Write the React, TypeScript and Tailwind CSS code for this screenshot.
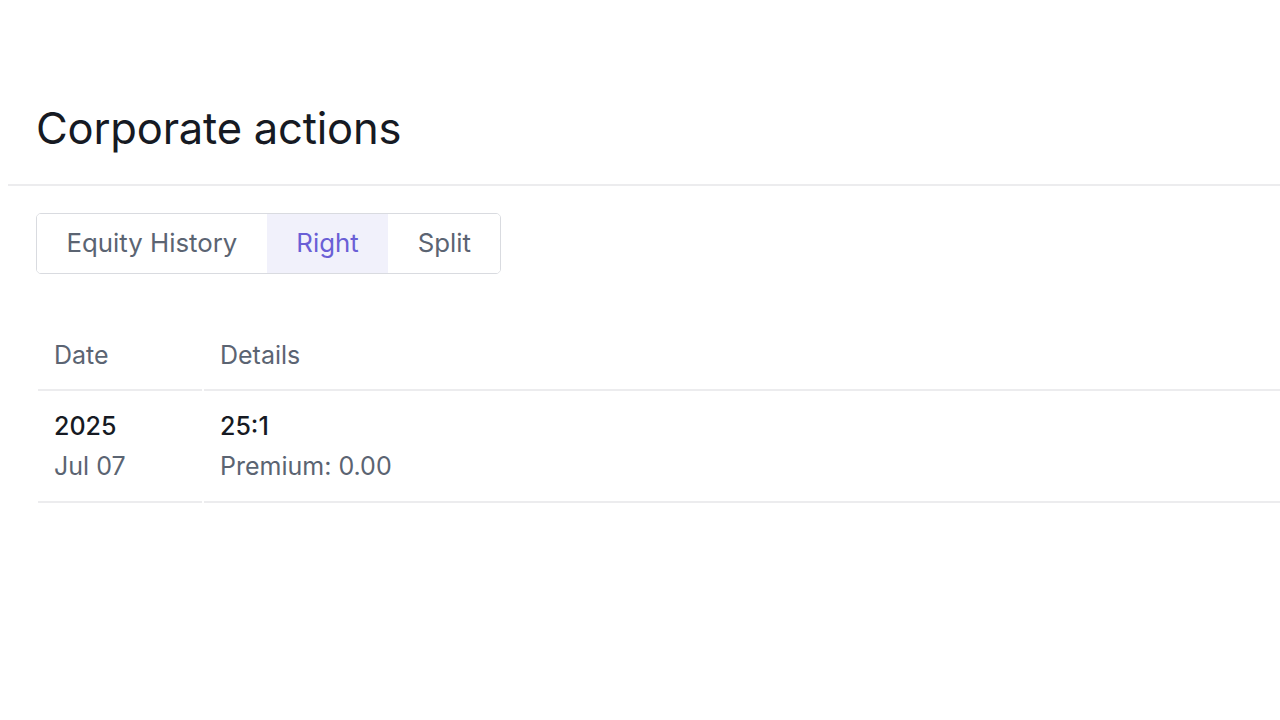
import { useState } from 'react';

const TABS = ['Equity History', 'Right', 'Split'];

const ROWS = [{ year: '2025', date: 'Jul 07', ratio: '25:1', premium: 'Premium: 0.00' }];

export default function App() {
  const [tab, setTab] = useState('Right');

  return (
    <div className="min-h-[720px] bg-white font-['Inter',sans-serif] pl-2">
      <div className="pt-[100px] pb-[28px] pl-7">
        <h1 className="text-[43.5px] leading-[56px] text-[#161a23] tracking-[-0.2px]">Corporate actions</h1>
      </div>
      <div className="border-t-2 border-[#ececee]" />

      <div className="pl-7 pt-[27px]">
        <div className="inline-flex border border-[#d9dbe0] rounded-[5px] overflow-hidden h-[61px]">
          {TABS.map((t) => (
            <button
              key={t}
              type="button"
              onClick={() => setTab(t)}
              className={`px-[29.5px] text-[25.8px] ${tab === t ? 'bg-[#f1f1fb] text-[#6a5fd6]' : 'bg-white text-[#5b6472]'}`}
            >
              {t}
            </button>
          ))}
        </div>
      </div>

      <table className="ml-[28px] mt-[49px] w-[calc(100%-26px)] border-separate border-spacing-x-[2px] border-spacing-y-0 text-[25px]">
        <thead>
          <tr>
            <th className="w-[164px] text-left font-normal text-[#5b6472] pl-4 h-[68px] border-b-2 border-[#ececee]">Date</th>
            <th className="text-left font-normal text-[#5b6472] pl-4 border-b-2 border-[#ececee]">Details</th>
          </tr>
        </thead>
        <tbody>
          {ROWS.map((r) => (
            <tr key={r.year}>
              <td className="pl-4 h-[112px] border-b-2 border-[#ececee] align-middle">
                <div className="text-[#161a23] leading-[40px] font-medium">{r.year}</div>
                <div className="text-[#5b6472] leading-[40px]">{r.date}</div>
              </td>
              <td className="pl-4 border-b-2 border-[#ececee]">
                <div className="text-[#161a23] leading-[40px] font-medium">{r.ratio}</div>
                <div className="text-[#5b6472] leading-[40px]">{r.premium}</div>
              </td>
            </tr>
          ))}
        </tbody>
      </table>
    </div>
  );
}
